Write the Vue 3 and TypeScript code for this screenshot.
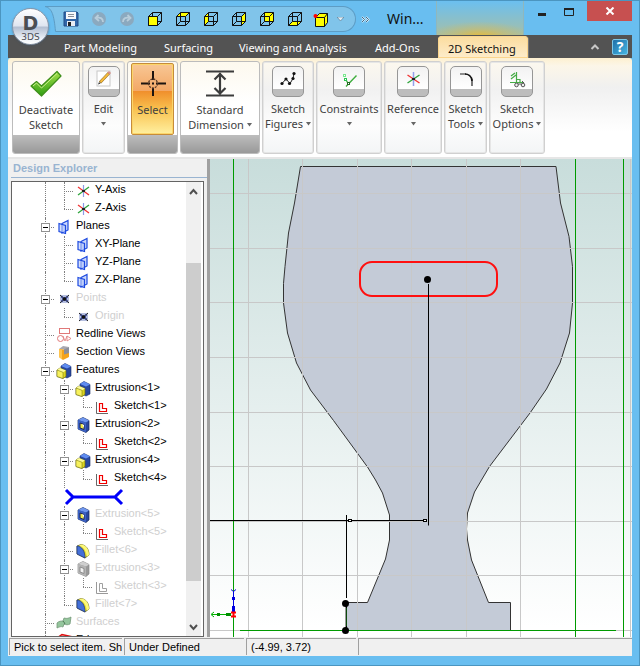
<script setup lang="ts">
import { ref } from 'vue'

interface TreeRow {
  label: string
  icon: string
  level: number
  toggle?: boolean
  last?: boolean
  dim?: boolean
  bar?: boolean
}

interface Group {
  lines: string[]
  icon: string
  kind: 'large' | 'tile' | 'active'
  arrow?: boolean
}

const tabs: string[] = ['Part Modeling', 'Surfacing', 'Viewing and Analysis', 'Add-Ons', '2D Sketching']
const activeTab = ref('2D Sketching')

const views: { name: string; face: string; solid?: boolean }[] = [
  { name: 'Front view', face: '0.5,4.5 9.5,4.5 9.5,13.5 0.5,13.5', solid: true },
  { name: 'Top view', face: '0.5,4.5 4.5,0.5 13.5,0.5 9.5,4.5' },
  { name: 'Left view', face: '0.5,4.5 4.5,0.5 4.5,9.5 0.5,13.5' },
  { name: 'Right view', face: '9.5,4.5 13.5,0.5 13.5,9.5 9.5,13.5' },
  { name: 'Back view', face: '4.5,0.5 13.5,0.5 13.5,9.5 4.5,9.5' },
  { name: 'Bottom view', face: '0.5,13.5 4.5,9.5 13.5,9.5 9.5,13.5' },
]

const groups: Group[] = [
  { lines: ['Deactivate', 'Sketch'], icon: 'check', kind: 'large' },
  { lines: ['Edit', ''], icon: 'edit', kind: 'tile', arrow: true },
  { lines: ['Select'], icon: 'select', kind: 'active' },
  { lines: ['Standard', 'Dimension'], icon: 'dimension', kind: 'large', arrow: true },
  { lines: ['Sketch', 'Figures'], icon: 'figures', kind: 'tile', arrow: true },
  { lines: ['Constraints', ''], icon: 'constraints', kind: 'tile', arrow: true },
  { lines: ['Reference', ''], icon: 'reference', kind: 'tile', arrow: true },
  { lines: ['Sketch', 'Tools'], icon: 'tools', kind: 'tile', arrow: true },
  { lines: ['Sketch', 'Options'], icon: 'options', kind: 'tile', arrow: true },
]

const rows: TreeRow[] = [
  { label: 'Y-Axis', icon: 'axis', level: 1 },
  { label: 'Z-Axis', icon: 'axis', level: 1, last: true },
  { label: 'Planes', icon: 'plane', level: 0, toggle: true },
  { label: 'XY-Plane', icon: 'plane', level: 1 },
  { label: 'YZ-Plane', icon: 'plane', level: 1 },
  { label: 'ZX-Plane', icon: 'plane', level: 1, last: true },
  { label: 'Points', icon: 'point', level: 0, toggle: true, dim: true },
  { label: 'Origin', icon: 'point', level: 1, last: true, dim: true },
  { label: 'Redline Views', icon: 'redline', level: 0 },
  { label: 'Section Views', icon: 'section', level: 0 },
  { label: 'Features', icon: 'boss', level: 0, toggle: true },
  { label: 'Extrusion<1>', icon: 'boss', level: 1, toggle: true },
  { label: 'Sketch<1>', icon: 'sketch', level: 2, last: true },
  { label: 'Extrusion<2>', icon: 'cut', level: 1, toggle: true },
  { label: 'Sketch<2>', icon: 'sketch', level: 2, last: true },
  { label: 'Extrusion<4>', icon: 'boss', level: 1, toggle: true },
  { label: 'Sketch<4>', icon: 'sketch', level: 2, last: true },
  { label: '', icon: '', level: 1, bar: true },
  { label: 'Extrusion<5>', icon: 'cut', level: 1, toggle: true, dim: true },
  { label: 'Sketch<5>', icon: 'sketch', level: 2, last: true, dim: true },
  { label: 'Fillet<6>', icon: 'fillet', level: 1, dim: true },
  { label: 'Extrusion<3>', icon: 'cutoff', level: 1, toggle: true, dim: true },
  { label: 'Sketch<3>', icon: 'sketchoff', level: 2, last: true, dim: true },
  { label: 'Fillet<7>', icon: 'fillet', level: 1, last: true, dim: true },
  { label: 'Surfaces', icon: 'surface', level: 0, dim: true },
  { label: 'Edges', icon: 'edges', level: 0 },
]

const gridX = [248, 302, 357, 411, 466, 520, 630]
const gridY = [193, 248, 302, 357, 412, 466, 521, 575, 630, 637]
</script>

<template>
  <div class="window">
    <svg class="defs" aria-hidden="true">
      <symbol id="i-axis" viewBox="0 0 16 16">
        <path d="M8.500 2v12" stroke="#8c9be8" stroke-width="1.200" />
        <path d="M3 12l5.500-4L14 4" stroke="#2ea43c" stroke-width="1.200" fill="none" />
        <path d="M3 4l5.500 4L14 12" stroke="#f03434" stroke-width="1.200" fill="none" />
        <rect x="7" y="7" width="3" height="2" fill="#222" />
      </symbol>
      <symbol id="i-plane" viewBox="0 0 16 16">
        <path d="M6 4.500L12 1.500V11L6 14z" fill="#cbd8fb" stroke="#1c49e0" stroke-width="1.200" />
        <path d="M3 4.500L9.500 6.500v8L3 12.500z" fill="#b9ccfa" fill-opacity=".6" stroke="#1c49e0" stroke-width="1.200" />
      </symbol>
      <symbol id="i-point" viewBox="0 0 16 16">
        <rect x="4" y="4" width="9" height="8" fill="#b6bfe0" />
        <path d="M4 4l9 8M13 4l-9 8" stroke="#222" />
        <path d="M5 6.500h7M5 9.500h7M6.500 5v6M10.500 5v6" stroke="#3a478a" stroke-width=".8" />
        <circle cx="8.500" cy="8" r="1.800" fill="#111" />
      </symbol>
      <symbol id="i-redline" viewBox="0 0 16 16">
        <g fill="none" stroke="#e07878"><rect x="3.500" y="1.500" width="10" height="5" /><circle cx="4.500" cy="11.500" r="3" /><path d="M7 9l2 5 2-5v5l4-2.500L11 9" stroke-width=".8" /></g>
      </symbol>
      <symbol id="i-section" viewBox="0 0 16 16">
        <path d="M8 3l5-1v7l-5 2z" fill="#8c8f9b" />
        <path d="M3 4l4-3 6 1-5 2.500z" fill="#a8a8b0" />
        <path d="M3 4l5 .5v5l5-1.500v4l-6 3-4-3z" fill="#f5a31c" />
        <path d="M3 4l3 1v9.500L3 12z" fill="#ffc44d" />
      </symbol>
      <symbol id="i-boss" viewBox="0 0 16 16">
        <path d="M5 3l4-2.500 6 3V13l-4 2-6-3z" fill="#29489e" stroke="#182c66" stroke-width=".6" />
        <path d="M5 3l4-2.500 6 3-4 2z" fill="#5f8cf0" />
        <path d="M1 7l3-2 6 2.500v6L7 15.500l-6-2z" fill="#d9d31f" stroke="#6b6a14" stroke-width=".7" />
        <path d="M1 7l3-2 6 2.500-3 1.800z" fill="#fcfa9a" />
        <path d="M1 7l6 2.300v6.200l-6-2z" fill="#f7f15c" stroke="#6b6a14" stroke-width=".5" />
      </symbol>
      <symbol id="i-cut" viewBox="0 0 16 16">
        <path d="M3 3l5-2.500 6 3V13l-3 2.500-8-3.500z" fill="#29489e" stroke="#142658" stroke-width=".7" />
        <path d="M3 3l5-2.500 6 3-3 2z" fill="#6f96ee" />
        <path d="M3 3l8 2.500v10L3 12z" fill="#3c62c4" />
        <path d="M5 6l4 1.500v5L5 11z" fill="#f2ec46" stroke="#1c2550" />
        <path d="M7 7l2 1v3z" fill="#fff" />
      </symbol>
      <symbol id="i-cutoff" viewBox="0 0 16 16">
        <path d="M3 3l5-2.500 6 3V13l-3 2.500-8-3.500z" fill="#999" stroke="#888" stroke-width=".7" />
        <path d="M3 3l5-2.500 6 3-3 2z" fill="#cfcfcf" />
        <path d="M3 3l8 2.500v10L3 12z" fill="#b4b4b4" />
        <path d="M5 6l4 1.500v5L5 11z" fill="#f0f0f0" stroke="#8c8c8c" />
      </symbol>
      <symbol id="i-sketch" viewBox="0 0 16 16">
        <path d="M2.500 3v11.500H14" fill="none" stroke="#666" />
        <path d="M5.500 4.500h3v5h4v3h-7z" fill="#fff" stroke="#f00000" stroke-width="1.200" />
      </symbol>
      <symbol id="i-sketchoff" viewBox="0 0 16 16">
        <path d="M2.500 3v11.500H14" fill="none" stroke="#999" />
        <path d="M5.500 4.500h3v5h4v3h-7z" fill="#fff" stroke="#a0a0a0" />
      </symbol>
      <symbol id="i-fillet" viewBox="0 0 16 16">
        <path d="M2 3l4-1.500C11 2 14 6 14 12l-4 3-8-4z" fill="#e5dd2c" stroke="#55561c" stroke-width=".7" />
        <path d="M6 1.500C11 2 14 6 14 12l-2 1.500C11 8 9 4 4 2.500z" fill="#fcf87a" />
        <path d="M2 3c5 .5 8 5 8 12l-8-4z" fill="#4470d8" stroke="#213a80" stroke-width=".8" />
      </symbol>
      <symbol id="i-surface" viewBox="0 0 16 16">
        <path d="M1 8c2-2 4-2 6-2l1-3c3 1 5 0 7-1l-1 7c-2 1-4 1-6 0l-1 3c-2-1-4 0-6 1z" fill="#94c59c" stroke="#739879" stroke-width=".8" />
        <path d="M7 6l2 2.500L8 9" stroke="#4f7957" fill="none" />
      </symbol>
      <symbol id="i-edges" viewBox="0 0 16 16">
        <path d="M1 5l5-3.500 9 2-4 3.500z" fill="#f5b4b4" stroke="#e01010" stroke-width="1.500" />
        <path d="M1 5v7l10 3V7M15 3.500V11l-4 4" fill="none" stroke="#e01010" stroke-width="1.500" />
      </symbol>

      <symbol id="r-check" viewBox="0 0 32 28">
        <linearGradient id="gCheck" x1="0" y1="0" x2="0" y2="1"><stop offset="0" stop-color="#a4e04a" /><stop offset="1" stop-color="#2f9e12" /></linearGradient>
        <path d="M1 16l5.500-4.500 5 4.500L27 1.500l4 4.500L11.500 26z" fill="url(#gCheck)" stroke="#3f8f1a" stroke-width="1.200" stroke-linejoin="round" />
        <path d="M3 16l3.500-3 5 5L27 3.500" fill="none" stroke="#caf08e" stroke-width="1" />
      </symbol>
      <symbol id="r-select" viewBox="0 0 32 28">
        <path d="M16 1v9M16 18v8M4 13.500h9M19 13.500h10" stroke="#1c1410" stroke-width="2" />
        <circle cx="16" cy="13.500" r="4.500" fill="none" stroke="#5a3a28" stroke-width="1.300" stroke-dasharray="2 1" />
        <rect x="15" y="12.500" width="2" height="2" fill="#1c1410" />
      </symbol>
      <symbol id="r-dimension" viewBox="0 0 32 28">
        <path d="M2 1.500h28M2 25.500h28M16 3v21M10.500 9.500L16 4l5.500 5.500M10.500 18l5.500 5.500 5.500-5.500" fill="none" stroke="#3c3c3c" stroke-width="2.200" />
      </symbol>
      <symbol id="t-edit" viewBox="0 0 20 18">
        <rect x="3" y="1" width="13" height="15" fill="#fff" stroke="#c8c8c8" />
        <path d="M6 12.500L15 3" stroke="#8a6a2c" stroke-width="3" />
        <path d="M6.500 12l8-8.500" stroke="#f6bb3c" stroke-width="2" />
        <path d="M14.500 3.500l1.500-1.500" stroke="#d89088" stroke-width="3" />
        <path d="M4 14.500l2.500-1-1.500-1.500z" fill="#333" />
      </symbol>
      <symbol id="t-figures" viewBox="0 0 20 18">
        <path d="M4 13.500L8 9l4 4.500 3-5 1-5" fill="none" stroke="#222" stroke-width="1" />
        <g fill="#111"><circle cx="4" cy="13.500" r="1.600" /><circle cx="8" cy="9" r="1.600" /><circle cx="11.500" cy="13.500" r="1.600" /><circle cx="15" cy="8.500" r="1.600" /><circle cx="16" cy="3.500" r="1.600" /></g>
      </symbol>
      <symbol id="t-constraints" viewBox="0 0 20 18">
        <path d="M7 16.500L17.500 5.500M7 10l2.500 4" fill="none" stroke="#3fae3f" stroke-width="1.400" />
        <g fill="#fff" stroke="#7be890"><rect x="4.500" y="4.500" width="2" height="2" /><rect x="5.500" y="8.500" width="2" height="2" stroke="#28c450" /><rect x="8.500" y="12.500" width="2" height="2" stroke="#226a22" /></g>
      </symbol>
      <symbol id="t-reference" viewBox="0 0 20 18">
        <path d="M10.500 2v14" stroke="#93a0ec" stroke-width="1.500" />
        <path d="M4.500 13l6-4 6-4" fill="none" stroke="#2ea43c" stroke-width="1.300" />
        <path d="M4.500 5l6 4 6 4" fill="none" stroke="#f03434" stroke-width="1.300" />
        <rect x="9" y="8" width="3" height="2" fill="#222" />
      </symbol>
      <symbol id="t-tools" viewBox="0 0 20 18">
        <path d="M4 4h6M16 9v7" fill="none" stroke="#222" stroke-width="1.200" /><path d="M9 4c3 0 7 2 7 7" fill="none" stroke="#111" stroke-width="1.500" />
      </symbol>
      <symbol id="t-options" viewBox="0 0 20 18">
        <path d="M9.500 2v10M3 12.500h13M4 6l4-3M4 9l5-4M10 9.500h3V12" fill="none" stroke="#45ab45" stroke-width="1.200" />
        <g fill="#eee" stroke="#555"><circle cx="9.500" cy="15" r="1.800" /><circle cx="16" cy="15" r="1.800" /></g><path d="M11 14h3.500M15 11l2 2" stroke="#555" />
      </symbol>
    </svg>

    <button class="app-button" aria-label="Application menu">
      <span class="logo-main">D</span>
      <span class="logo-sub">3DS</span>
    </button>

    <header class="titlebar">
      <svg class="swoosh" width="12" height="26" viewBox="0 0 12 26">
        <path d="M0 .5C7 2 9 9 10.500 25.500H12V.5z" fill="#80c4ea" />
        <path d="M12 .5H0C7 2 9 9 10.500 25.500H12" fill="none" stroke="#5d9cc4" />
      </svg>
      <div class="quick">
        <button class="qbtn" aria-label="Save">
          <svg width="16" height="16" viewBox="0 0 16 16">
            <path d="M1 1h13l1 1v13H1z" fill="#3167a8" stroke="#234c86" />
            <rect x="3" y="1" width="10" height="7" fill="#f7f9fc" />
            <path d="M5 3.500h6M5 5.500h6" stroke="#8a8f98" />
            <rect x="4" y="10" width="8" height="5" fill="#e8edf4" /><rect x="5" y="11" width="3" height="4" fill="#222" />
          </svg>
        </button>
        <button class="qbtn" aria-label="Undo">
          <svg width="16" height="16" viewBox="0 0 16 16"><circle cx="8" cy="8" r="7" fill="#8ba9bf" /><path d="M12 11c0-4-3-5-7-4M7.500 4L4.500 7l3.500 3" fill="none" stroke="#b8cddb" stroke-width="1.800" /></svg>
        </button>
        <button class="qbtn" aria-label="Redo">
          <svg width="16" height="16" viewBox="0 0 16 16"><circle cx="8" cy="8" r="7" fill="#8ba9bf" /><path d="M4 11c0-4 3-5 7-4M8.500 4l3 3L8 10" fill="none" stroke="#b8cddb" stroke-width="1.800" /></svg>
        </button>
        <button v-for="v in views" :key="v.name" class="qbtn" :aria-label="v.name">
          <svg width="14" height="14" viewBox="0 0 14 14">
            <polygon :points="v.face" fill="#ffff00" />
            <path d="M0.500 4.500h9v9h-9zM4.500 0.500h9v9h-9zM0.500 4.500l4-4M9.500 4.500l4-4M0.500 13.500l4-4M9.500 13.500l4-4" fill="none" stroke="#111" />
            <polygon v-if="v.solid" :points="v.face" fill="#ffff00" stroke="#111" />
          </svg>
        </button>
        <button class="qbtn iso" aria-label="Isometric view">
          <svg width="16" height="15" viewBox="0 0 16 15">
            <path d="M2.500 5.500l4-4h8v9l-3 4h-9z" fill="#ffff00" stroke="#111" />
            <path d="M2.500 5.500h9v9M11.500 5.500l3-4" fill="none" stroke="#111" />
            <circle cx="2.500" cy="4" r="2" fill="#f00" />
          </svg>
        </button>
        <button class="qmore" aria-label="Customize toolbar"><svg width="7" height="4" viewBox="0 0 7 4"><path d="M0 0h7L3.500 4z" fill="#e2eef6" stroke="#53728a" stroke-width=".6" /></svg></button>
      </div>
      <button class="overflow" aria-label="More commands">
        <svg width="9" height="7" viewBox="0 0 9 7"><path d="M1 1l2.500 2.500L1 6M5 1l2.500 2.500L5 6" fill="none" stroke="#d8ecf8" stroke-width="2" /><path d="M1 1l2.500 2.500L1 6M5 1l2.500 2.500L5 6" fill="none" stroke="#456a86" /></svg>
      </button>
      <span class="title">Win...</span>
      <div class="glow"></div>
      <div class="controls">
        <button aria-label="Minimize"><svg width="12" height="12" viewBox="0 0 12 12"><path d="M2 8.500h8" stroke="#222" stroke-width="3" /></svg></button>
        <button aria-label="Maximize"><svg width="12" height="12" viewBox="0 0 12 12"><path d="M1.500 2.500h9v7h-9z" fill="none" stroke="#222" /><path d="M1 3h10" stroke="#222" stroke-width="2" /></svg></button>
        <button class="close" aria-label="Close"><svg width="10" height="8" viewBox="0 0 10 8"><path d="M1.500 .5l7 7M8.500 .5l-7 7" stroke="#fff" stroke-width="2" /></svg></button>
      </div>
    </header>

    <nav class="tabs">
      <button v-for="t in tabs" :key="t" :class="['tab', { active: t === activeTab }]" @click="activeTab = t">{{ t }}</button>
      <div class="tab-tools">
        <button aria-label="Collapse ribbon"><svg width="10" height="6" viewBox="0 0 10 6"><path d="M1.500 5L5 1.500 8.500 5" fill="none" stroke="#c8c8c8" stroke-width="2" /></svg></button>
        <button class="help" aria-label="Help">?</button>
      </div>
    </nav>

    <section class="ribbon">
      <div v-for="g in groups" :key="g.icon" :class="['group', g.kind]">
        <button class="command">
          <span v-if="g.kind === 'tile'" class="tile"><svg width="20" height="18"><use :href="'#t-' + g.icon" /></svg></span>
          <svg v-else class="big" width="32" height="28"><use :href="'#r-' + g.icon" /></svg>
          <span v-for="(line, i) in g.lines" :key="i" class="line">{{ line }}<svg v-if="g.arrow && i === 1" :class="['arrow', { spaced: line }]" width="5" height="4" viewBox="0 0 5 4"><path d="M0 0h5L2.500 3.500z" fill="#666" /></svg></span>
        </button>
        <div v-if="g.kind !== 'tile'" class="footer"></div>
      </div>
    </section>

    <main class="work">
      <aside class="explorer">
        <h2>Design Explorer</h2>
        <div class="treebox">
          <ul class="tree">
            <li v-for="(row, n) in rows" :key="n" :class="['row', { dim: row.dim }]">
              <span v-for="l in row.level" :key="l" class="guide full"></span>
              <template v-if="row.bar">
                <svg class="rollback" width="60" height="18" viewBox="0 0 60 18"><path d="M2 2l7 7-7 7M9 9h43M58 2l-7 7 7 7" fill="none" stroke="#0000fa" stroke-width="3" /></svg>
              </template>
              <template v-else>
                <span :class="['guide', row.last ? 'half' : 'full', 'branch']">
                  <button v-if="row.toggle" class="toggle" :aria-label="'Collapse ' + row.label"></button>
                </span>
                <span class="icon"><svg width="16" height="16"><use :href="'#i-' + row.icon" /></svg></span>
                <span class="label">{{ row.label }}</span>
              </template>
            </li>
          </ul>
          <div class="scroll">
            <button aria-label="Scroll up"><svg width="9" height="7" viewBox="0 0 9 7"><path d="M1 6l3.500-4L8 6" fill="none" stroke="#505050" stroke-width="2" /></svg></button>
            <div class="track"><div class="thumb"></div></div>
            <button aria-label="Scroll down"><svg width="9" height="7" viewBox="0 0 9 7"><path d="M1 1l3.500 4L8 1" fill="none" stroke="#505050" stroke-width="2" /></svg></button>
          </div>
        </div>
      </aside>

      <div class="viewport">
        <svg class="drawing" viewBox="210 159 422 478" preserveAspectRatio="xMinYMin slice">
          <path
            d="M300.500 166.500L294.500 203 288.500 233 285 266.500 283.500 283.500V303L287.500 333 296.500 363 310.500 390 333.500 420.500 367.500 467 375.500 480 382.500 493 389.500 515V540L385.500 559 367.500 602.500H346V630.500H510.500V602.500H488.500L471.500 560 467.500 540 466.500 529 467.500 513 474.500 492 481.500 480 489.500 466.500 530 413 546.500 389 560 363 569.500 333 572.500 303V266.500L569 236.500 560.500 203 556 166.500z"
            fill="#c4cbd7" stroke="#333"
          />
          <g class="grid">
            <line v-for="x in gridX" :key="'x' + x" :x1="x + 0.5" :x2="x + 0.5" y1="159" y2="637" />
            <line v-for="y in gridY" :key="'y' + y" x1="210" x2="632" :y1="y + 0.5" :y2="y + 0.5" />
          </g>
          <path d="M233.500 159V637M575.500 159V637M623.500 159V637M240 630.500H616" stroke="#009a00" shape-rendering="crispEdges" />
          <rect x="360" y="262" width="137" height="34" rx="12" fill="none" stroke="#ff1010" stroke-width="2" />
          <path d="M428.500 284V525.500M210 520.500H424M346.500 515V598M346.500 603V630" stroke="#000" fill="none" />
          <path d="M346.500 608V626" stroke="#0c4a0c" />
          <g fill="#fff" stroke="#000"><rect x="348.500" y="519.500" width="3" height="2" /><rect x="423.500" y="519.500" width="3" height="2" /></g>
          <circle cx="427.500" cy="279.500" r="3.500" /><circle cx="345.500" cy="603.500" r="3.500" /><circle cx="345.500" cy="630.500" r="3.500" />
          <path d="M231 589.500l2.500 2 2.500-2M233.500 591v16" stroke="#0000e0" fill="none" /><path d="M233.500 606v7M233.500 597v3" stroke="#0000e0" stroke-width="3" />
          <path d="M214 612l-3 2.500 3 2.500M212 614.500h19" stroke="#00b000" fill="none" /><path d="M217 614.500h3M226 614.500h5" stroke="#009000" stroke-width="3" />
          <path d="M231 612.500h5M231 616.500h5M233.500 612v5" stroke="#ff0000" stroke-width="2" />
        </svg>
      </div>
    </main>

    <footer class="status">
      <span>Pick to select item. Sh</span>
      <span>Under Defined</span>
      <span>(-4.99, 3.72)</span>
      <span></span>
    </footer>
  </div>
</template>

<style>
body {
  margin: 0;
}
</style>

<style scoped>
* {
  box-sizing: border-box;
}
button {
  margin: 0;
  padding: 0;
  border: 0;
  background: none;
  font: inherit;
  color: inherit;
}
svg {
  display: block;
}
.defs {
  position: absolute;
  width: 0;
  height: 0;
}
.window {
  position: relative;
  display: flex;
  flex-direction: column;
  height: 100vh;
  padding: 0 7px 9px;
  border: 1px solid #4b95c0;
  background: #69bef0;
  font-family: "Noto Sans", "Open Sans", sans-serif;
  font-size: 11px;
  overflow: hidden;
}

.app-button {
  position: absolute;
  left: 11px;
  top: 7px;
  z-index: 2;
  display: flex;
  flex-direction: column;
  align-items: center;
  width: 37px;
  height: 37px;
  padding-top: 4px;
  border: 1px solid #8795a8;
  border-radius: 50%;
  background: linear-gradient(#fff 0, #dfe5f0 48%, #b3bfd2 52%, #eef2f8 85%, #fff);
  box-shadow: 0 1px 2px #4568;
  color: #4a4e54;
}
.logo-main {
  font: bold 19px/20px "DejaVu Sans", sans-serif;
}
.logo-sub {
  font: 9px/9px "DejaVu Sans", sans-serif;
}

.titlebar {
  display: flex;
  flex: none;
  align-items: flex-start;
  height: 34px;
}
.swoosh {
  flex: none;
  margin: 5px 0 0 37px;
}
.quick {
  display: flex;
  align-items: center;
  height: 26px;
  margin-top: 5px;
  padding-right: 8px;
  border: solid #5d9cc4;
  border-width: 1px 1px 1px 0;
  border-radius: 0 13px 13px 0;
  background: #80c4ea;
}
.qbtn {
  display: grid;
  place-items: center;
  width: 28px;
  height: 24px;
}
.iso {
  width: 24px;
}
.qmore {
  display: grid;
  place-items: center;
  width: 14px;
  height: 24px;
}
.overflow {
  height: 36px;
  margin-left: 5px;
}
.title {
  margin-left: 17px;
  font-size: 14px;
  line-height: 36px;
  color: #111;
}
.glow {
  width: 88px;
  height: 34px;
  margin-left: 12px;
  border: solid #8fb7bd;
  border-width: 0 1px;
  background: radial-gradient(ellipse 60% 45% at 50% 105%, #e5bb3c, #d4bb5c88 50%, transparent), linear-gradient(#6bbff0, #a5bfa8);
}
.controls {
  display: flex;
  margin-left: auto;
}
.controls button {
  display: grid;
  place-items: center;
  width: 27px;
  height: 21px;
}
.controls .close {
  width: 45px;
  margin-left: 5px;
  height: 20px;
  background: #c75050;
}

.tabs {
  display: grid;
  grid-template-columns: 100px 75px 136px 73px 90px 1fr;
  flex: none;
  height: 23px;
  padding-left: 46px;
  background: #535353;
}
.tab {
  padding: 2px 0 0 10px;
  text-align: left;
  white-space: nowrap;
  color: #fff;
}
.tab.active {
  margin-top: 1px;
  border-radius: 4px 4px 0 0;
  background: linear-gradient(#fbdc9d, #fdeccb);
  box-shadow: inset 0 0 0 1px #fbd58d, 1px 0 #777;
  color: #111;
}
.tab-tools {
  display: flex;
  justify-content: flex-end;
  align-items: center;
  gap: 12px;
  padding-right: 4px;
}
.help {
  width: 16px;
  height: 16px;
  border: 1px solid #7cc8e8;
  border-radius: 2px;
  background: linear-gradient(135deg, #1f6fa8, #46b5e2);
  color: #fff;
  font-size: 14px;
  font-weight: bold;
  line-height: 14px;
}

.ribbon {
  display: grid;
  grid-template-columns: 68px 43px 51px 80px 52px 66px 58px 43px 56px;
  gap: 2px;
  flex: none;
  height: 101px;
  padding: 3px 4px;
  border-bottom: 2px solid #e6e6e6;
  border-radius: 3px 3px 0 0;
  background: linear-gradient(#fdf0d0 0, #fcf6e8 8%, #f0f0f0 30%, #fff 75%);
}
.group {
  display: flex;
  flex-direction: column;
  border: 1px solid #bcbcbc;
  border-radius: 3px;
  background: linear-gradient(#fdf9ee, #fff 45%);
  overflow: hidden;
}
.group.tile {
  border-color: #d0d0d0;
  background: linear-gradient(#fcf8ee, #f1f1f1 30%, #fdfdfd 70%, #f3f5f6);
  box-shadow: inset 0 0 0 1px #e6e6e6;
}
.command {
  display: flex;
  flex: 1;
  flex-direction: column;
  align-items: center;
  color: #414141;
}
.group.active .command {
  margin: 1px 3px 0;
  border: 1px solid #c68c3a;
  border-radius: 2px;
  background: linear-gradient(#f8c795 0, #f3a866 38%, #f08f2c 39%, #f9c250 65%, #fff0a0 100%);
  box-shadow: inset 0 0 0 1px #fcd66a;
}
.big {
  margin: 8px 0 4px;
}
.active .big {
  margin-top: 6px;
}
.tile .tile {
  display: flex;
  justify-content: center;
  width: 32px;
  height: 31px;
  margin: 4px 0;
  padding-top: 3px;
  border: 1px solid #969696;
  border-radius: 5px;
  background: linear-gradient(#f2f2f2, #fff 22px, #bdbdbd 22px);
}
.line {
  display: flex;
  align-items: center;
  justify-content: center;
  height: 15px;
  line-height: 15px;
  white-space: nowrap;
}
.spaced {
  margin-left: 3px;
}
.footer {
  height: 18px;
  background: linear-gradient(#bdbdbd, #999);
}

.work {
  display: flex;
  flex: 1;
  min-height: 0;
  background: #f0f0f0;
  font-family: "Liberation Sans", Arial, sans-serif;
}
.explorer {
  display: flex;
  flex: none;
  flex-direction: column;
  width: 202px;
  padding: 0 3px;
  border-right: 3px solid #a0a0a0;
}
h2 {
  margin: 0 -3px 3px 0;
  padding-left: 2px;
  border-bottom: 1px solid #99b4d1;
  font-size: 11px;
  line-height: 18px;
  color: #99b4d1;
}
.treebox {
  display: flex;
  flex: 1;
  min-height: 0;
  border: 1px solid #646464;
  background: #fff;
}
.tree {
  flex: 1;
  min-width: 0;
  margin: 0;
  padding: 0 0 0 24px;
  list-style: none;
  overflow: hidden;
}
.row {
  display: flex;
  height: 18px;
  color: #000;
}
.guide {
  position: relative;
  flex: none;
  width: 19px;
}
.guide::before {
  content: "";
  position: absolute;
  left: 9px;
  top: 0;
  height: 18px;
  border-left: 1px dotted #808080;
}
.guide.half::before {
  height: 9px;
}
.branch::after {
  content: "";
  position: absolute;
  left: 9px;
  right: 1px;
  top: 9px;
  border-top: 1px dotted #808080;
}
.toggle {
  position: absolute;
  left: 5px;
  top: 5px;
  z-index: 1;
  width: 9px;
  height: 9px;
  border: 1px solid #919191;
  background: linear-gradient(#000, #000) center / 5px 1px no-repeat #fff;
}
.icon {
  flex: none;
  width: 19px;
  padding: 1px 0 0 1px;
}
.label {
  padding-left: 2px;
  line-height: 14px;
  white-space: nowrap;
}
.dim .label {
  color: #cfcfcf;
}
.rollback {
  flex: none;
  margin-left: 9px;
}
.scroll {
  display: flex;
  flex: none;
  flex-direction: column;
  width: 17px;
  border-right: 2px solid #fff;
  background: #f0f0f0;
}
.scroll button {
  display: grid;
  place-items: center;
  height: 18px;
}
.track {
  flex: 1;
  padding: 63px 0 37px;
}
.thumb {
  height: 100%;
  background: #cdcdcd;
}
.viewport {
  position: relative;
  flex: 1;
  min-width: 0;
  background: linear-gradient(#c8dddb, #fff 98%);
}
.drawing {
  position: absolute;
  inset: 0;
  width: 100%;
  height: 100%;
}
.grid {
  stroke: #c8c8c8;
  stroke-width: 1px;
}

.status {
  display: grid;
  grid-template-columns: 113px 120px 110px 1fr;
  gap: 2px;
  flex: none;
  height: 19px;
  padding: 1px 0 1px 1px;
  background: #f0f0f0;
  font-family: "Liberation Sans", Arial, sans-serif;
  color: #000;
}
.status span {
  padding-left: 4px;
  border: solid #a0a0a0;
  border-width: 1px 0 0 1px;
  line-height: 16px;
  white-space: nowrap;
  overflow: hidden;
}
</style>
